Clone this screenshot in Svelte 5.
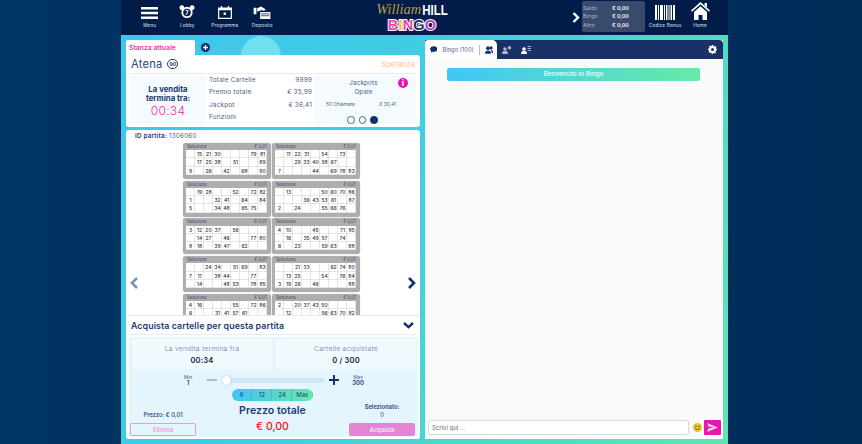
<script>
  const _ = null;
  const tickets = [
    [[_,15,21,30,_,_,_,79,81],[_,17,25,38,_,51,_,_,89],[9,_,26,_,42,_,68,_,90]],
    [[_,11,22,31,_,54,_,73,_],[_,_,29,33,40,58,67,_,_],[7,_,_,_,44,_,69,78,83]],
    [[_,19,28,_,_,52,_,72,82],[1,_,_,32,41,_,64,_,84],[5,_,_,34,48,_,65,75,_]],
    [[_,13,_,_,_,50,60,70,86],[_,_,_,36,43,53,61,_,87],[2,_,24,_,_,55,66,76,_]],
    [[3,12,20,37,_,56,_,_,_],[_,14,27,_,46,_,_,77,80],[8,18,_,39,47,_,62,_,_]],
    [[4,10,_,_,45,_,_,71,85],[_,16,_,35,49,57,_,74,_],[6,_,23,_,_,59,63,_,88]],
    [[_,_,24,34,_,51,69,_,83],[7,11,_,38,44,_,_,77,_],[_,14,_,_,48,53,_,78,85]],
    [[_,_,21,33,_,_,62,74,80],[_,13,25,_,_,54,_,76,84],[3,19,26,_,46,_,_,_,88]],
    [[4,16,_,_,_,55,_,72,86],[6,_,_,31,41,57,61,_,_]],
    [[2,_,20,37,43,50,_,_,_],[_,12,_,_,_,56,63,70,82]]
  ];
  const stats = [['Totale Cartelle','9999'],['Premio totale','€ 35,99'],['Jackpot','€ 36,41'],['Funzioni','']];
  const balance = [['Saldo','€ 0,00'],['Bingo','€ 0,00'],['Altro','€ 0,00']];
  const bingo = [['B','#ee3fb4'],['I','#f4c63a'],['N','#ee3fb4'],['G','#1b2f66'],['O','#b23fd0']];
</script>

<div class="page">
  <div class="shell">
    <header class="top">
      <nav class="nav">
        <div class="nav-item">
          <svg width="17" height="12" viewBox="0 0 18 14" preserveAspectRatio="none"><path d="M0 0h18v3H0zM0 5.500h18v3H0zM0 11h18v3H0z" fill="#fff"/></svg>
          <span>Menu</span>
        </div>
        <div class="nav-item">
          <svg width="16" height="14" viewBox="0 0 17 15"><circle cx="3" cy="3" r="2.600" fill="#fff"/><circle cx="14" cy="3" r="2.600" fill="#fff"/><circle cx="8.500" cy="8" r="6" fill="#fff"/><circle cx="8.500" cy="8" r="4" fill="#011c49"/><text x="8.500" y="10.200" class="seven">7</text></svg>
          <span>Lobby</span>
        </div>
        <div class="nav-item">
          <svg width="14" height="13" viewBox="0 0 15 14"><path d="M0 1.500h3V0h1.500v1.500h6V0H12v1.500h3V14H0zM1.300 4.500v8.200h12.400V4.500z" fill="#fff" fill-rule="evenodd"/><rect x="6" y="7" width="2.600" height="2.600" fill="#fff"/></svg>
          <span>Programma</span>
        </div>
        <div class="nav-item">
          <svg width="18" height="13" viewBox="0 0 18 14"><path d="M0 2h3v7H0zM3.800 2.500 8 .5l4 2.500 1 1.600-3 .4-2-.6-1.500 1-2.700.6z" fill="#fff"/><path d="M7 6.500h11V14H7z" fill="#fff"/><path d="M8 8.500h9M8 10.500h9" stroke="#011c49" stroke-width=".8"/></svg>
          <span>Deposito</span>
        </div>
      </nav>

      <div class="logo">
        <div class="wh"><span class="script">William</span><span class="hill">HILL</span></div>
        <div class="bingo">
          {#each bingo as [letter, colour]}<span style="color:{colour}">{letter}</span>{/each}
        </div>
      </div>

      <div class="top-right">
        <svg class="chev" width="8" height="11" viewBox="0 0 8 11"><path d="M1.500 1 6 5.500 1.500 10" fill="none" stroke="#fff" stroke-width="2.400"/></svg>
        <div class="balance">
          {#each balance as [k, v]}
            <div class="bal-row"><span class="k">{k}</span><span class="v">{v}</span></div>
          {/each}
        </div>
        <div class="nav-item wide">
          <svg width="20" height="15" viewBox="0 0 20 15"><path d="M0 0h2v15H0zM3 0h1v15H3zM5 0h3v15H5zM9 0h1v15H9zM11 0h1.500v15H11zM13.500 0h1v15h-1zM15.500 0h1.500v15h-1.500zM18 0h2v15h-2z" fill="#fff"/></svg>
          <span>Codice Bonus</span>
        </div>
        <div class="nav-item home">
          <svg width="19" height="18" viewBox="0 0 19 18"><path d="M9.500 0 19 8.500l-1 1.200L9.500 2.300 1 9.700 0 8.500z" fill="#fff"/><path d="M13.500 1H16v4.500l-2.500-2.200z" fill="#fff"/><path d="M3 10l6.500-5.700L16 10v8h-4.500v-5h-4v5H3z" fill="#fff"/></svg>
          <span>Home</span>
        </div>
      </div>
    </header>

    <main class="main">
      <i class="bubble b2"></i><i class="bubble b1"></i>

      <section class="left">
        <div class="tabs">
          <div class="tab">Stanza attuale</div>
          <svg class="add" width="9" height="9" viewBox="0 0 9 9"><circle cx="4.500" cy="4.500" r="4.500" fill="#12306b"/><path d="M4.500 2v5M2 4.500h5" stroke="#fff" stroke-width="1.300"/></svg>
        </div>

        <div class="room">
          <div class="room-head">
            <span class="room-name">Atena</span>
            <span class="ninety">90</span>
            <span class="hope">Speranza</span>
          </div>
          <div class="room-body">
            <div class="sale">
              <b>La vendita<br/>termina tra:</b>
              <span class="sale-time">00:34</span>
            </div>
            <div class="stats">
              {#each stats as [k, v]}
                <div class="stat"><span>{k}</span><span>{v}</span></div>
              {/each}
            </div>
            <div class="jack">
              <div class="jack-title">Jackpots<br/>Opale</div>
              <span class="info">i</span>
              <div class="jack-row"><span>50 Chiamata</span><span>€ 36,41</span></div>
              <div class="dots"><i></i><i></i><i class="on"></i></div>
            </div>
          </div>
        </div>

        <div class="game">
          <div class="tickets-wrap">
            <div class="game-id"><b>ID partita:</b> 1306060</div>
            <div class="tickets">
              {#each tickets as t}
                <div class="ticket">
                  <div class="t-head"><span>Selezione</span><span>€ 0,01</span></div>
                  <div class="t-grid">
                    {#each t as row}
                      {#each row as n}<span class="cell">{n ?? ''}</span>{/each}
                    {/each}
                  </div>
                </div>
              {/each}
            </div>
            <svg class="arrow prev" width="9" height="12" viewBox="0 0 9 12"><path d="M7 1 2 6l5 5" fill="none" stroke="#7f92b8" stroke-width="2.600"/></svg>
            <svg class="arrow next" width="9" height="12" viewBox="0 0 9 12"><path d="M2 1l5 5-5 5" fill="none" stroke="#12306b" stroke-width="2.600"/></svg>
          </div>

          <div class="buy">
            <div class="buy-head">
              <span>Acquista cartelle per questa partita</span>
              <svg width="11" height="7" viewBox="0 0 11 7"><path d="M1 1l4.500 4.200L10 1" fill="none" stroke="#12306b" stroke-width="2.400"/></svg>
            </div>
            <div class="buy-panel">
              <div class="boxes">
                <div class="box"><span>La vendita termina fra</span><b>00:34</b></div>
                <div class="box"><span>Cartelle acquistate</span><b>0 / 300</b></div>
              </div>
              <div class="slider-row">
                <div class="lim"><span>Min</span><b>1</b></div>
                <i class="minus"></i>
                <div class="track"><i class="thumb"></i></div>
                <svg width="10" height="10" viewBox="0 0 10 10"><path d="M5 0v10M0 5h10" stroke="#12306b" stroke-width="2"/></svg>
                <div class="lim"><span>Max</span><b>300</b></div>
              </div>
              <div class="chips"><span>6</span><span>12</span><span>24</span><span>Max</span></div>
              <div class="totals">
                <div class="side">
                  <div class="price">Prezzo: € 0,01</div>
                  <button class="btn ghost">Elimina</button>
                </div>
                <div class="total">
                  <div class="total-label">Prezzo totale</div>
                  <div class="total-value">€ 0,00</div>
                </div>
                <div class="side">
                  <div class="selected"><b>Selezionato:</b><span>0</span></div>
                  <button class="btn solid">Acquista</button>
                </div>
              </div>
            </div>
          </div>
        </div>
      </section>

      <section class="chat">
        <div class="chat-tabs">
          <div class="chat-tab">
            <svg width="8" height="7" viewBox="0 0 8 7"><path d="M4 0c2.200 0 4 1.300 4 3S6.200 6 4 6H2.800L.8 7l.5-1.600C.5 4.800 0 4 0 3c0-1.700 1.800-3 4-3z" fill="#12306b"/></svg>
            <span>Bingo (100)</span>
            <i class="sep"></i>
            <svg width="9" height="8" viewBox="0 0 9 8"><circle cx="3.200" cy="2" r="2" fill="#12306b"/><path d="M0 8c0-2.200 1.200-3.400 3.200-3.400S6.400 5.800 6.400 8z" fill="#12306b"/><circle cx="6.500" cy="1.800" r="1.700" fill="#12306b"/><path d="M6 4c2 0 3 1.200 3 3.200H7.200C7.100 5.800 6.800 4.800 6 4z" fill="#12306b"/></svg>
          </div>
          <svg class="t-ic dim" width="10" height="8" viewBox="0 0 10 8"><circle cx="3" cy="3" r="1.800" fill="#aab4cb"/><path d="M0 8c0-2 1.200-3.200 3-3.200S6 6 6 8z" fill="#aab4cb"/><circle cx="7.500" cy="1.700" r="1.700" fill="#aab4cb"/></svg>
          <svg class="t-ic" width="10" height="8" viewBox="0 0 10 8"><circle cx="3" cy="3" r="1.800" fill="#fff"/><path d="M0 8c0-2 1.200-3.200 3-3.200S6 6 6 8z" fill="#fff"/><path d="M6.500.5H10M6.500 2.500H10M6.500 4.500H10" stroke="#cfd6e6" stroke-width=".8"/></svg>
          <svg class="gear" width="9" height="9" viewBox="0 0 9 9"><path d="M3.700 0h1.600l.2 1.200.8.4 1-.7 1.100 1.100-.7 1 .4.800L9 3.700v1.600l-1.200.2-.4.8.7 1-1.100 1.100-1-.7-.8.4L5.300 9H3.700l-.2-1.200-.8-.4-1 .7L.6 7l.7-1-.4-.8L0 5.300V3.700l1.200-.2.4-.8-.7-1L2 .6l1 .7.8-.4z" fill="#fff"/><circle cx="4.500" cy="4.500" r="1.500" fill="#1a3068"/></svg>
        </div>
        <div class="chat-body">
          <div class="welcome">Benvenuto in Bingo</div>
        </div>
        <div class="chat-input">
          <div class="input">Scrivi qui ...</div>
          <svg width="9" height="9" viewBox="0 0 9 9"><circle cx="4.500" cy="4.500" r="4.500" fill="#eec22e"/><circle cx="3" cy="3.300" r=".7" fill="#5b4300"/><circle cx="6" cy="3.300" r=".7" fill="#5b4300"/><path d="M2 5.200c1 1.800 4 1.800 5 0" fill="none" stroke="#5b4300" stroke-width=".7"/></svg>
          <div class="send">
            <svg width="11" height="9" viewBox="0 0 11 9"><path d="M0 0l11 4.500L0 9l1.500-3.500L7 4.500 1.500 3.500z" fill="#fbd3ee"/></svg>
          </div>
        </div>
      </section>
    </main>
  </div>
</div>

<style>
  :global(body) { margin: 0; background: #002f5b; }
  .page {
    width: 862px; height: 444px; overflow: hidden;
    display: flex; justify-content: center;
    background: linear-gradient(90deg, #003462, #002c58);
    font-family: Inter, "Open Sans", sans-serif;
    color: #1d3a73;
  }
  .shell { width: 607px; margin-right: 13px; display: flex; flex-direction: column; }
  .top {
    height: 35px; background: #011c49; flex: none;
    display: flex; align-items: flex-start; padding-left: 10px; color: #fff; position: relative; box-sizing: border-box;
  }
  .nav { display: flex; width: 245px; }
  .nav-item {
    width: 37.5px; height: 28px; display: flex; flex-direction: column; align-items: center; justify-content: flex-end;
    gap: 3.5px; font-size: 4.700px; line-height: 6px; letter-spacing: .15px; color: #dfe5f0; white-space: nowrap;
  }
  .seven { font-size: 6px; font-weight: 700; fill: #fff; text-anchor: middle; }
  .logo { width: 72px; display: flex; flex-direction: column; align-items: center; }
  .wh { display: flex; align-items: baseline; height: 17px; margin-top: 1px; line-height: 16px; }
  .script { font-family: "Liberation Serif", serif; font-style: italic; font-size: 14.500px; color: #b99a45; }
  .hill { font-family: "Liberation Sans", sans-serif; font-weight: 700; font-size: 11.500px; color: #fff; margin-left: 1px; transform: scaleY(1.200); }
  .bingo {
    font-family: "Liberation Sans", sans-serif; font-weight: 700; font-size: 14.500px; line-height: 15px; letter-spacing: .2px;
    -webkit-text-stroke: 2px #fff; paint-order: stroke fill;
  }
  .top-right { margin-left: auto; display: flex; align-items: flex-start; padding-right: 13px; }
  .chev { margin-top: 12px; margin-right: 2px; }
  .balance {
    width: 63px; height: 31px; margin: 1px 0 0; box-sizing: border-box; background: #3a4a6d; border-radius: 2px;
    padding: 2.500px 1px 0 1px;
  }
  .bal-row { display: flex; height: 8.700px; line-height: 8.700px; font-size: 5.300px; }
  .k { width: 29px; color: #aeb7cb; }
  .v { font-weight: 600; color: #fff; }
  .wide { width: 40px; gap: 2.500px; }
  .home { width: 30px; gap: 2px; }
  .main {
    flex: 1; position: relative; display: grid; grid-template-columns: 294px 298px; gap: 5px;
    padding: 5px; min-height: 0; overflow: hidden;
    background: linear-gradient(115deg, #3cc6ef 0%, #41cde2 40%, #4ed8c8 70%, #60e5b2 100%);
  }
  .bubble { position: absolute; border-radius: 50%; }
  .b1 { width: 40px; height: 40px; left: 120px; top: 1px; background: #6fe0ee; }
  .b2 { width: 44px; height: 44px; left: 88px; top: 5px; background: #45c9ea; }
  .left { position: relative; display: flex; flex-direction: column; min-height: 0; }
  .tabs { height: 15px; flex: none; display: flex; align-items: center; }
  .tab {
    width: 69px; height: 15px; box-sizing: border-box; padding: 2px 3px 0; background: #fff; border-radius: 2px 2px 0 0;
    color: #ee2fb0; font-size: 6.800px; font-weight: 600; line-height: 11px;
  }
  .add { margin-left: 6px; margin-top: -1px; }
  .room { height: 72px; flex: none; background: #fff; border-radius: 0 3px 3px 3px; box-sizing: border-box; padding: 0 4px; }
  .room-head { height: 18px; display: flex; align-items: center; border-bottom: 1px solid #e7eaee; padding: 0 1px; }
  .room-name { font-size: 11.200px; color: #2a4478; letter-spacing: .2px; }
  .ninety {
    margin-left: 5px; width: 8.500px; height: 8.500px; border: 1.500px solid #1d3a73; border-radius: 50%;
    font-size: 5px; font-weight: 700; text-align: center; line-height: 8.500px;
  }
  .hope { margin-left: auto; color: #fdc18a; font-size: 7.400px; letter-spacing: .1px; }
  .room-body { display: flex; height: 48px; margin-top: 2px; }
  .sale {
    width: 76px; background: #f4fafe; display: flex; flex-direction: column; align-items: center; justify-content: center;
    text-align: center; font-size: 7.800px; line-height: 9.500px; color: #1d3a73; padding-top: 2px; box-sizing: border-box;
  }
  .sale-time { color: #ee2fb0; font-size: 12px; line-height: 14px; font-weight: 300; letter-spacing: .3px; }
  .stats { width: 108px; padding: 0 2px 0 3px; box-sizing: border-box; font-size: 6.400px; letter-spacing: .2px; color: #4b5e87; }
  .stat { display: flex; justify-content: space-between; height: 12.400px; line-height: 9px; }
  .jack { flex: 1; background: #f4fafe; position: relative; text-align: center; font-size: 6.200px; letter-spacing: .2px; color: #4b5e87; padding-top: 3px; }
  .jack-title { line-height: 8.500px; padding-right: 3px; }
  .info {
    position: absolute; right: 8px; top: 2px; width: 10px; height: 10px; border-radius: 50%; background: #e815ae;
    color: #fff; font-size: 8px; font-weight: 800; line-height: 10px; text-align: center;
  }
  .jack-row { display: flex; justify-content: space-between; font-size: 4.800px; letter-spacing: 0; padding: 0 20px 0 12px; margin-top: 5px; }
  .dots { display: flex; gap: 4px; justify-content: center; margin-top: 9px; padding-right: 5px; }
  .dots i { width: 5.500px; height: 5.500px; border: 1px solid #4c638f; border-radius: 50%; }
  .dots .on { background: #12306b; border-color: #12306b; }
  .game {
    flex: 1; margin-top: 3px; background: #fff; border-radius: 3px; min-height: 0;
    display: flex; flex-direction: column; overflow: hidden;
  }
  .tickets-wrap { height: 185px; flex: none; position: relative; overflow: hidden; }
  .game-id { font-size: 6.300px; padding: 2px 0 0 9px; line-height: 8px; color: #4b5e87; letter-spacing: .2px; }
  .game-id b { color: #1d3a73; font-weight: 600; }
  .tickets {
    display: grid; grid-template-columns: 87.500px 87.500px; column-gap: 1.500px; row-gap: 1.700px;
    width: 177px; margin: 3px 0 0 57px;
  }
  .ticket { height: 36px; background: #aeaeae; border-radius: 3px; box-sizing: border-box; padding: 0 3px; box-shadow: 0 0 1px #999; }
  .t-head { display: flex; justify-content: space-between; height: 7.300px; line-height: 7px; font-size: 4.300px; color: #32456f; padding: 0 1px; }
  .t-grid {
    display: grid; grid-template-columns: repeat(9, 9px); grid-auto-rows: 8.200px; background: #fff;
    width: 81px; height: 24.600px;
  }
  .cell {
    font-size: 5px; font-weight: 500; color: #333; text-align: center; line-height: 8.200px;
    box-shadow: inset -.5px -.5px 0 #cdcdcd;
  }
  .arrow { position: absolute; top: 147px; }
  .prev { left: 4px; }
  .next { left: 281px; }
  .buy { flex: 1; background: #fff; border-top: 1px solid #e7eaee; box-sizing: border-box; min-height: 0; position: relative; }
  .buy-head {
    height: 18px; margin: 0 4px; padding: 0 2px 0 1px; border-bottom: 1px solid #e7eaee;
    display: flex; align-items: center; justify-content: space-between;
    font-size: 8.800px; font-weight: 600; letter-spacing: .1px; color: #1d3a73;
  }
  .buy-panel { margin: 2px 2px 0 3px; height: 100px; background: #e5f5fd; border-radius: 3px; padding: 2px 2px 0 3px; box-sizing: border-box; }
  .boxes { display: flex; gap: 4px; height: 30px; }
  .box {
    flex: 1; background: #f1fafe; display: flex; flex-direction: column; align-items: center; justify-content: center; gap: 3px;
    font-size: 6.800px; letter-spacing: .2px; color: #8a97b4;
  }
  .box b { font-size: 7.500px; color: #15233f; font-weight: 600; }
  .slider-row { display: flex; align-items: center; height: 18px; margin-top: 2px; padding-left: 46px; }
  .lim { width: 20px; display: flex; flex-direction: column; align-items: center; font-size: 4.800px; line-height: 5px; color: #4b5e87; }
  .lim b { font-size: 6px; color: #1d3a73; font-weight: 600; }
  .slider-row svg { margin-left: 4px; margin-right: 9px; }
  .minus { width: 10px; height: 2px; background: #a9bdd9; margin: 0 5px 0 9px; }
  .track { width: 103px; height: 5px; background: #cfe6f5; border-radius: 3px; position: relative; }
  .thumb { position: absolute; left: 0; top: -2px; width: 9px; height: 9px; border-radius: 50%; background: #fff; box-shadow: 0 0 2px #9ab; }
  .chips {
    width: 81px; height: 12px; margin: 0 auto; border-radius: 6px; overflow: hidden; display: flex; position: relative; left: -2px;
    background: linear-gradient(90deg, #41c5f5, #66e7a8); font-size: 6px; color: #1d3a73;
  }
  .chips span { flex: 1; text-align: center; line-height: 12px; box-shadow: inset -.5px 0 0 #3aa5b5; }
  .totals { display: flex; justify-content: space-between; margin: 2px 1px 0 -2px; }
  .side { width: 66px; display: flex; flex-direction: column; justify-content: flex-end; height: 33px; position: relative; }
  .price { font-size: 5.800px; font-weight: 500; color: #1d3a73; text-align: center; position: absolute; top: 8px; left: 0; right: 0; }
  .selected { display: flex; flex-direction: column; align-items: center; font-size: 5.800px; line-height: 8px; position: absolute; top: 0; left: 0; right: 0; color: #2a4478; }
  .selected b { font-weight: 600; }
  .btn { height: 13px; width: 66px; padding: 0; border-radius: 2px; font: 600 5.800px Inter, sans-serif; box-sizing: border-box; }
  .ghost { background: #fff0; border: 1px solid #e59bdd; color: #eb9bdc; }
  .solid { background: #e384d5; border: 0; color: #fdeaf8; }
  .total { text-align: center; padding-top: 1px; }
  .total-label { font-size: 10.600px; font-weight: 600; color: #1d3a73; line-height: 13px; }
  .total-value { font-size: 10.500px; font-weight: 500; color: #f01010; line-height: 13px; margin-top: 3px; }
  .chat { display: flex; flex-direction: column; background: #fafafa; min-height: 0; }
  .chat-tabs { height: 19px; flex: none; background: #1a3068; border-radius: 0 4px 0 0; display: flex; align-items: center; position: relative; }
  .chat-tab {
    width: 72px; height: 19px; box-sizing: border-box; background: #fff; border-radius: 3px 5px 0 0; padding: 0 4px 0 5px;
    display: flex; align-items: center; font-size: 5.800px; color: #5a6a8e;
  }
  .chat-tab span { margin-left: 5px; white-space: nowrap; }
  .sep { width: 1px; height: 10px; background: #b5bfd3; margin: 0 5px; }
  .t-ic { margin-left: 5px; margin-top: 1px; }
  .t-ic:not(.dim) { margin-left: 9px; }
  .gear { margin-left: auto; margin-right: 6px; }
  .chat-body { flex: 1; min-height: 0; padding: 9px 0 0 22px; }
  .welcome {
    width: 253px; height: 13px; border-radius: 2px; background: linear-gradient(90deg, #42c6f8, #66eaa8);
    color: #f2fbff; font-size: 6.500px; text-align: center; line-height: 13px; font-weight: 500;
  }
  .chat-input { height: 21px; flex: none; display: flex; align-items: center; padding: 0 2px 3px 3px; box-sizing: border-box; }
  .input {
    width: 261px; height: 15px; box-sizing: border-box; background: #fff; border: 1px solid #d9d9d9; border-radius: 2px;
    font-size: 6px; line-height: 13px; padding-left: 3px; color: #6c6c6c; margin-right: 4px;
  }
  .send { width: 17px; height: 15px; margin-left: 2px; background: #e815ae; border-radius: 1px; display: flex; align-items: center; justify-content: center; }
</style>
